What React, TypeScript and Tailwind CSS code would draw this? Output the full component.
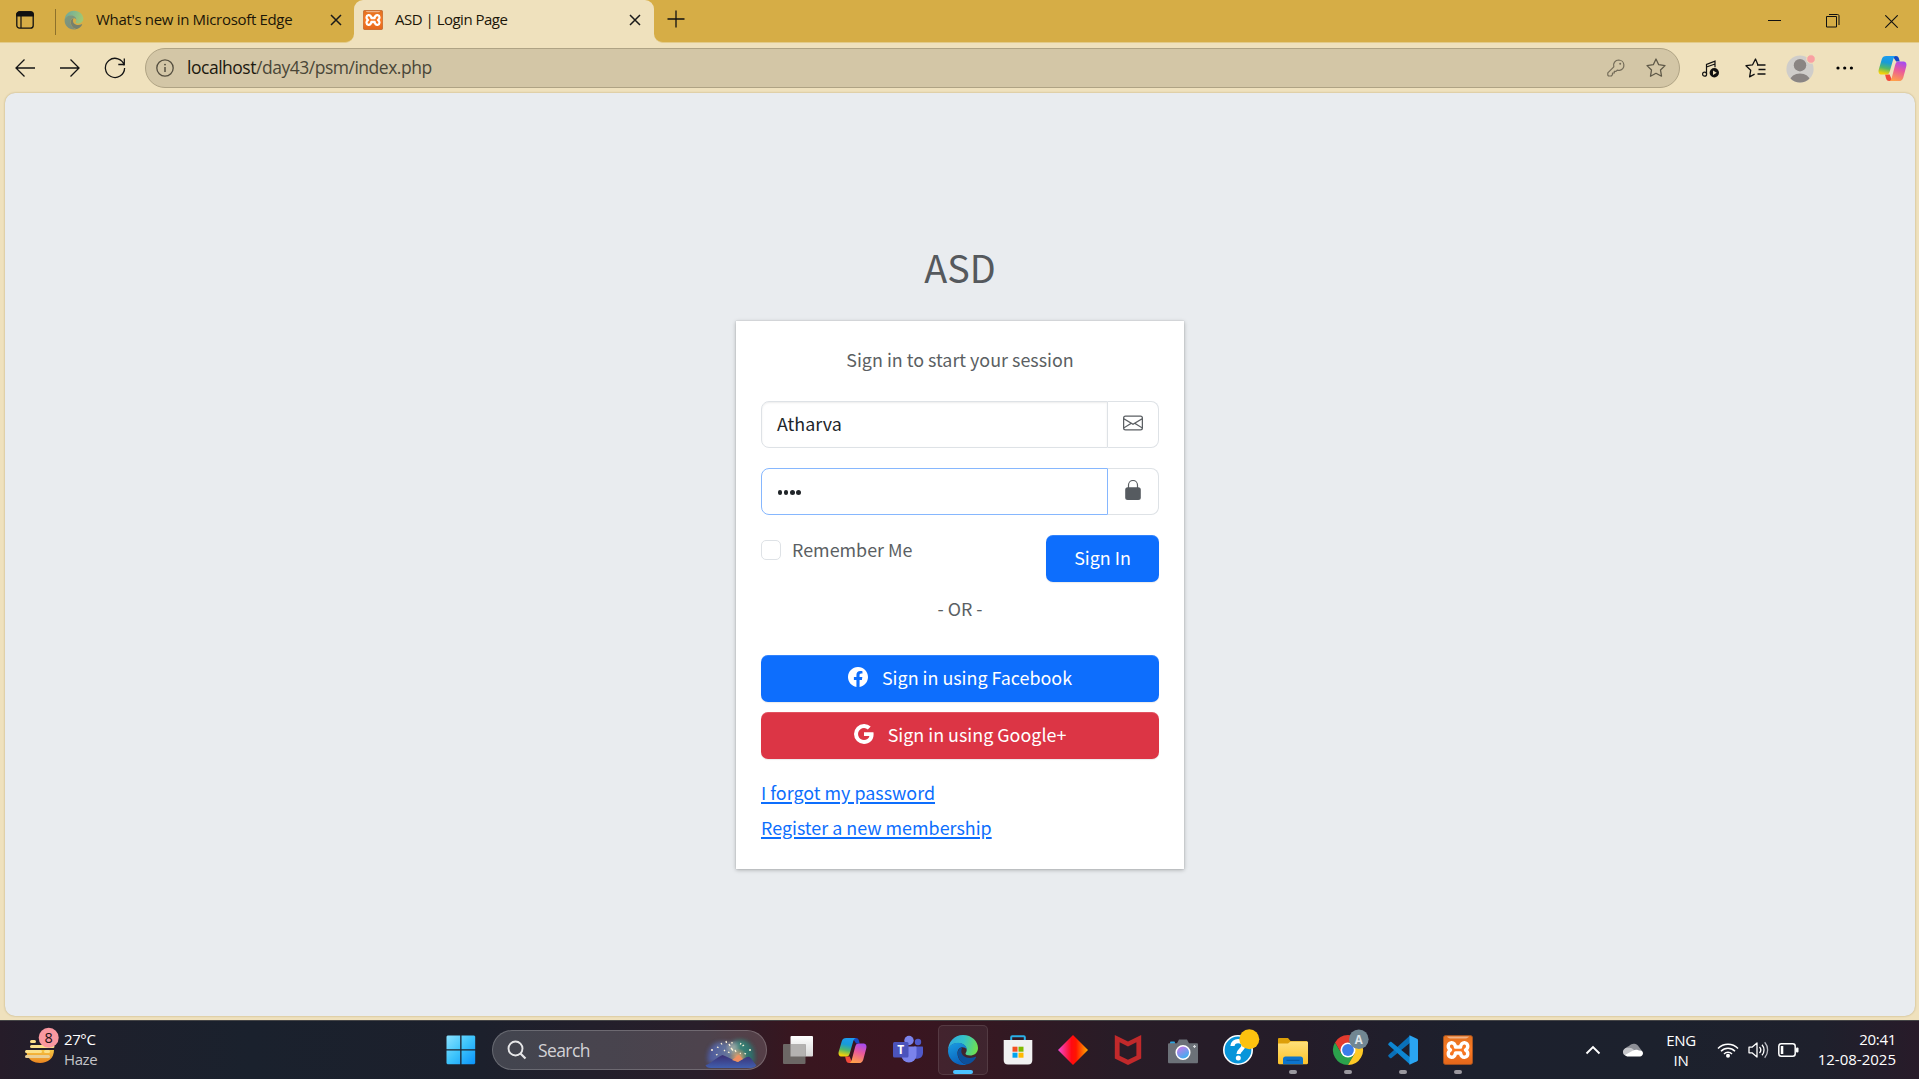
import type { ReactNode } from "react";
import { BsEnvelope, BsFacebook, BsGoogle } from "react-icons/bs";

const UI = "font-['Open_Sans','Noto_Sans',sans-serif]";
const PAGE = "font-['Noto_Sans_CJK_SC',sans-serif]";

/* ---------- shared logos ---------- */

function EdgeLogo({ size, faded = false }: { size: number; faded?: boolean }) {
  const id = faded ? "edge-f" : "edge";
  return (
    <svg width={size} height={size} viewBox="0 0 32 32">
      <defs>
        <linearGradient id={id + "a"} x1="0" y1="0.3" x2="1" y2="0.5">
          <stop offset="0" stopColor={faded ? "#6fa79a" : "#2fa9e0"} />
          <stop offset="0.5" stopColor={faded ? "#86b98b" : "#35c3c8"} />
          <stop offset="1" stopColor={faded ? "#a3c870" : "#6fe04f"} />
        </linearGradient>
        <linearGradient id={id + "b"} x1="0" y1="0" x2="0.4" y2="1">
          <stop offset="0" stopColor={faded ? "#7a9a80" : "#1b9de2"} />
          <stop offset="1" stopColor={faded ? "#7f8f7c" : "#0a63bd"} />
        </linearGradient>
      </defs>
      <path d="M1 17C1 8 7 1 16 1c9 0 15 6.500 15 13 0 5-4 7.500-8 7.500-3 0-4.500-1-4.500-2 0-.8 1.200-1.500 1.200-3.500C19.700 12 16 9 11 9 5 9 1.500 13 1 17z" fill={`url(#${id}a)`} />
      <path d="M1 17C1.300 12 6 8.800 11 8.800c5 0 8.700 3 8.700 6.700-1-1.500-2.500-2.200-4.200-2.200-3 0-5 2.500-5 6 0 6 5 11.200 9.500 11.300-1.200.4-2.500.5-4 .5C7 31 1 24 1 17z" fill={`url(#${id}b)`} />
      <path d="M15.500 13.300c-2.800.5-4.800 3-4.800 6 0 6 5.300 11.700 10 11 4-1 7-4 8.300-6.800.3-.7-.2-1-.8-.7-1.400.7-3.200 1.200-5.200 1.200-5 0-8.700-3.200-8.700-7 0-1.500.4-2.700 1.200-3.700z" fill={faded ? "#76806d" : "#0c509c"} />
    </svg>
  );
}

function CopilotLogo({ size, id }: { size: number; id: string }) {
  return (
    <svg width={size} height={size} viewBox="0 0 30 30">
      <defs>
        <linearGradient id={id + "l"} x1="0.5" y1="0" x2="0.3" y2="1">
          <stop offset="0" stopColor="#1d9bf0" />
          <stop offset="0.35" stopColor="#189bd8" />
          <stop offset="0.65" stopColor="#52b869" />
          <stop offset="0.95" stopColor="#f2d10a" />
        </linearGradient>
        <linearGradient id={id + "r"} x1="0.7" y1="0" x2="0.4" y2="1">
          <stop offset="0" stopColor="#a64bf0" />
          <stop offset="0.45" stopColor="#ea5a9b" />
          <stop offset="1" stopColor="#ffa04a" />
        </linearGradient>
      </defs>
      <path d="M15 2h3.500c2 0 2.700 1.300 3.300 3.200l.7 2.600h-3.700z" fill="#1648c5" />
      <path d="M15 28h-3.500c-2 0-2.700-1.300-3.300-3.200l-.9-3.600H12z" fill="#f2493b" />
      <path d="M8.500 2h10c-1.600.3-2.300 1.800-2.900 4l-3.300 11.500c-.7 2.600-1.600 3.700-3.800 3.700H4c-3 0-4-2.200-3.200-5.200L3.900 5.500C4.700 3 6 2 8.500 2z" fill={`url(#${id}l)`} />
      <path d="M21.500 28h-10c1.600-.3 2.300-1.800 2.900-4l3.300-12.500c.7-2.600 1.600-3.700 3.800-3.700H26c3 0 4 2.200 3.200 5.200L26.100 24.500C25.300 27 24 28 21.500 28z" fill={`url(#${id}r)`} />
    </svg>
  );
}

function XamppLogo({ size, id }: { size: number; id: string }) {
  return (
    <svg width={size} height={size} viewBox="0 0 30 30">
      <defs>
        <linearGradient id={id} x1="0" y1="0" x2="0" y2="1">
          <stop offset="0" stopColor="#e0701f" />
          <stop offset="0.5" stopColor="#fb7a24" />
          <stop offset="1" stopColor="#e2661a" />
        </linearGradient>
      </defs>
      <rect x="0.400" y="0.400" width="29.200" height="29.200" rx="2.500" fill={`url(#${id})`} stroke="#a85420" strokeWidth="0.800" />
      <path d="M4 1.500h22c-1 1.600-2.500 2-4 2H8c-1.500 0-3-.4-4-2z" fill="#fff" opacity="0.450" />
      <path d="M12.500 12h5c.2-2.500 2-4.600 4.400-4.200 3.600.7 3.800 5.200.6 7.200 3.200 2 3 6.500-.6 7.200-2.400.4-4.200-1.700-4.400-4.200h-5c-.2 2.500-2 4.600-4.400 4.200-3.600-.7-3.800-5.200-.6-7.200-3.200-2-3-6.500.6-7.200 2.400-.4 4.200 1.700 4.400 4.200z" fill="none" stroke="#fff" strokeWidth="3.400" strokeLinejoin="round" />
    </svg>
  );
}

/* ---------- browser chrome ---------- */

function CloseX() {
  return (
    <svg width="12" height="12" viewBox="0 0 12 12" className="shrink-0">
      <path d="M1 1l10 10M11 1L1 11" stroke="#1a1a1a" strokeWidth="1.500" />
    </svg>
  );
}

function TabStrip() {
  return (
    <div className={`flex h-[43px] shrink-0 bg-[#efe1bd] text-[15px] tracking-[-0.32px] text-[#1b1608] ${UI}`}>
      <div className="flex w-[354px] items-center rounded-br-[9px] border-b border-[#e3cb8a] bg-[#d6ad46] pb-[3px]">
        <svg width="18" height="18" viewBox="0 0 18 18" className="ml-4 shrink-0">
          <rect x="0.800" y="0.800" width="16.400" height="16.400" rx="2.800" fill="none" stroke="#111" strokeWidth="1.300" />
          <path d="M.8 5V3.500C.8 2 2 .8 3.500.8h11c1.500 0 2.700 1.200 2.700 2.700V5zM5 5v12" fill="#111" stroke="#111" strokeWidth="1.200" />
        </svg>
        <div className="ml-[21px] mt-1 h-[26px] w-px bg-[#8d712b]" />
        <div className="ml-2"><EdgeLogo size={20} faded /></div>
        <span className="ml-3 w-[234px] whitespace-nowrap">What's new in Microsoft Edge</span>
        <CloseX />
      </div>
      <div className="w-[300px] bg-[#d6ad46]">
        <div className="flex h-full items-center rounded-t-[9px] bg-[#efe1bd] pb-1 pl-[9px]">
          <XamppLogo size={20} id="xt" />
          <span className="ml-3 w-[234px] whitespace-nowrap tracking-[-0.5px]">ASD | Login Page</span>
          <CloseX />
        </div>
      </div>
      <div className="flex flex-1 items-center rounded-bl-[9px] border-b border-[#e3cb8a] bg-[#d6ad46]">
        <svg width="18" height="18" viewBox="0 0 18 18" className="mb-1 ml-[13px]">
          <path d="M9 .5v17M.5 9h17" stroke="#111" strokeWidth="1.300" />
        </svg>
        <div className="ml-auto flex items-center">
          <svg width="13" height="13" viewBox="0 0 13 13" className="mr-[45px]">
            <path d="M0 5.500h13" stroke="#111" />
          </svg>
          <svg width="14" height="14" viewBox="0 0 14 14" className="mr-[45px]">
            <path d="M.5 2.500h10v10.500H.5zM3 .5h8.500c1 0 1.500.5 1.500 1.500v9" fill="none" stroke="#111" />
          </svg>
          <svg width="13" height="13" viewBox="0 0 13 13" className="mr-[21px]">
            <path d="M.3.3l12.400 12.400M12.700.3L.3 12.700" stroke="#111" strokeWidth="1.100" />
          </svg>
        </div>
      </div>
    </div>
  );
}

function Toolbar() {
  return (
    <div className="flex h-[50px] shrink-0 items-center bg-[#efe1bd]">
      <svg width="20" height="18" viewBox="0 0 20 18" className="ml-[15px]">
        <path d="M20 9H1M9.500.5L1 9l8.500 8.500" fill="none" stroke="#141414" strokeWidth="1.300" />
      </svg>
      <svg width="20" height="18" viewBox="0 0 20 18" className="ml-[25px]">
        <path d="M0 9h19M10.500.5L19 9l-8.500 8.500" fill="none" stroke="#141414" strokeWidth="1.300" />
      </svg>
      <svg width="22" height="22" viewBox="0 0 22 22" className="ml-6">
        <path d="M20.300 8.500A9.600 9.600 0 1 0 20.600 11M20.300 1.500v6h-6" fill="none" stroke="#141414" strokeWidth="1.300" />
      </svg>
      <div className="ml-[19px] flex h-10 w-[1535px] items-center rounded-full border border-[#afa384] bg-[#d3c6a6]">
        <svg width="18" height="18" viewBox="0 0 18 18" className="ml-[10px]">
          <circle cx="9" cy="9" r="8.200" fill="none" stroke="#544e3f" strokeWidth="1.300" />
          <path d="M9 8v5" stroke="#544e3f" strokeWidth="1.500" />
          <circle cx="9" cy="5.600" r="0.950" fill="#544e3f" />
        </svg>
        <span className={`ml-[13px] whitespace-nowrap pb-px text-[17.5px] tracking-[-0.48px] text-[#4a4638] ${UI}`}>
          <span className="text-[#1c190f]">localhost</span>/day43/psm/index.php
        </span>
        <svg width="18" height="18" viewBox="0 0 18 18" className="ml-auto mr-[21px]">
          <path d="M11.700 1a5.200 5.200 0 0 1 1 10.300c-1 .2-1.900.1-2.500-.2L9 12.300H7.300V14H5.500v1.700L4.300 17H1.500l-.7-.8v-2.400l6-6A5.200 5.200 0 0 1 11.700 1z" fill="none" stroke="#746c59" strokeWidth="1.200" strokeLinejoin="round" />
          <circle cx="13.200" cy="4.800" r="1" fill="#746c59" />
        </svg>
        <svg width="20" height="20" viewBox="0 0 20 20" className="mr-[13px]">
          <path d="M10 1l2.700 5.700 6.300.9-4.500 4.400 1 6.200L10 15.300l-5.500 2.900 1-6.200L1 7.600l6.300-.9z" fill="none" stroke="#5f5948" strokeWidth="1.300" strokeLinejoin="round" />
        </svg>
      </div>
      <svg width="18" height="18" viewBox="0 0 18 18" className="ml-[22px] mt-[2px]">
        <path d="M4.500 14V4.500L13 1.200v6M4.500 7L13 4" fill="none" stroke="#111" strokeWidth="1.200" />
        <circle cx="2.600" cy="14.200" r="2" fill="none" stroke="#111" strokeWidth="1.200" />
        <circle cx="12.300" cy="12.800" r="4.700" fill="#111" />
        <path d="M11 10.500v4.600l3.700-2.300z" fill="#efe1bd" />
      </svg>
      <svg width="21" height="20" viewBox="0 0 21 20" className="ml-[25px]">
        <path d="M12.800 6.500L10.500 1 7.600 6.800 1 7.700l4.700 4.600-1.100 6.500 5-2.600M12 7h8.500M13.500 11.500h7M12.500 16h8" fill="none" stroke="#111" strokeWidth="1.300" strokeLinejoin="round" />
      </svg>
      <svg width="29" height="29" viewBox="0 0 29 29" className="ml-[20px]">
        <clipPath id="av"><circle cx="14" cy="15" r="13.600" /></clipPath>
        <circle cx="14" cy="15" r="13.600" fill="#cfcdca" />
        <g clipPath="url(#av)" fill="#8a8583">
          <circle cx="14" cy="11.200" r="6.200" />
          <ellipse cx="14" cy="26.500" rx="9.800" ry="7" />
        </g>
        <circle cx="25" cy="5" r="4.300" fill="#f9a0a2" stroke="#efe1bd" />
      </svg>
      <svg width="18" height="4" viewBox="0 0 18 4" className="ml-[21px]">
        <circle cx="2" cy="2" r="1.600" /><circle cx="8.700" cy="2" r="1.600" /><circle cx="15.400" cy="2" r="1.600" />
      </svg>
      <div className="ml-[24px]"><CopilotLogo size={29} id="ct" /></div>
    </div>
  );
}

/* ---------- login page ---------- */

function SocialButton({ color, icon, children }: { color: string; icon: ReactNode; children: ReactNode }) {
  return (
    <button className={`flex h-[47px] w-full items-center justify-center gap-[14px] rounded-[7px] pb-[3px] text-white shadow-[inset_0_1px_0_rgba(255,255,255,0.15),0_1px_1px_rgba(0,0,0,0.08)] ${color}`}>
      {icon}
      <span>{children}</span>
    </button>
  );
}

function LoginPage() {
  return (
    <main className={`mb-1 ml-[5px] mr-1 flex flex-1 flex-col items-center rounded-[10px] bg-[#e9ecef] text-[17.9px] text-[#5b5f63] shadow-[0_0_2px_rgba(120,90,20,0.45)] ${PAGE}`}>
      <h1 className="mt-[142px] flex h-[63px] items-center text-[37.8px] leading-[63px] text-[#55595d]">ASD</h1>
      <section className="mt-[23px] flex h-[548px] w-[448px] flex-col bg-white px-[25px] shadow-[0_0_1px_rgba(0,0,0,0.16),0_1px_4px_rgba(0,0,0,0.28)]">
        <p className="mt-[23px] text-center leading-[30px]">Sign in to start your session</p>
        <div className="mt-[27px] flex h-[47px]">
          <div className="flex w-[347px] items-center rounded-l-[8px] border border-[#dee2e6] pb-[3px] pl-[15px] text-[#212529] shadow-[inset_0_1px_2px_rgba(0,0,0,0.075)]">Atharva</div>
          <div className="flex flex-1 items-center justify-center rounded-r-[8px] border border-l-0 border-[#dee2e6] pb-1"><BsEnvelope size={20} /></div>
        </div>
        <div className="mt-5 flex h-[47px]">
          <div className="flex w-[347px] items-center gap-[1.5px] rounded-l-[8px] border border-[#86b7fe] pl-[15.5px] pt-[2px]">
            {[0, 1, 2, 3].map((i) => <i key={i} className="size-[4.7px] rounded-full bg-[#212529]" />)}
          </div>
          <div className="flex flex-1 items-center justify-center rounded-r-[8px] border border-l-0 border-[#dee2e6] pb-[3px]">
            <svg width="16" height="20" viewBox="0 0 16 20">
              <path d="M3.500 8V5a4.500 4.500 0 0 1 9 0v3" fill="none" stroke="#5b5f63" strokeWidth="1.200" />
              <rect x="0.200" y="7.300" width="15.600" height="12.700" rx="2.500" fill="#565b60" />
            </svg>
          </div>
        </div>
        <div className="mt-5 flex h-[47px] justify-between">
          <label className="flex h-[30px] items-center gap-[11px]">
            <span className="size-5 rounded-[5px] border border-[#dee2e6]" />
            <span className="pb-[3px] leading-[30px]">Remember Me</span>
          </label>
          <button className="h-[47px] w-[113px] rounded-[7px] bg-[#0d6efd] pb-[2px] text-white shadow-[inset_0_1px_0_rgba(255,255,255,0.15),0_1px_1px_rgba(0,0,0,0.08)]">Sign In</button>
        </div>
        <p className="mt-[11px] text-center leading-[30px]">- OR -</p>
        <div className="mt-[32px] flex flex-col gap-[10px]">
          <SocialButton color="bg-[#0d6efd]" icon={<BsFacebook size={20} />}>Sign in using Facebook</SocialButton>
          <SocialButton color="bg-[#dc3545]" icon={<BsGoogle size={20} />}>Sign in using Google+</SocialButton>
        </div>
        <div className="mt-[18px] flex flex-col items-start gap-[5px] leading-[30px] text-[#0d6efd]">
          <a className="underline decoration-[1.5px] underline-offset-[2px]">I forgot my password</a>
          <a className="underline decoration-[1.5px] underline-offset-[2px]">Register a new membership</a>
        </div>
      </section>
    </main>
  );
}

/* ---------- taskbar ---------- */

function Cell({ children, active, running }: { children: ReactNode; active?: boolean; running?: boolean }) {
  return (
    <div className="relative flex h-full w-[55px] shrink-0 items-center justify-center">
      {active && <div className="absolute inset-x-[2.5px] top-[4px] h-[50px] rounded-[5px] border border-white/10 bg-white/[0.06]" />}
      <div className="relative">{children}</div>
      {active && <div className="absolute bottom-[5px] h-1 w-5 rounded-full bg-[#4cc2ff]" />}
      {running && <div className="absolute bottom-[5px] h-1 w-2 rounded-full bg-[#9a989f]" />}
    </div>
  );
}

function TaskbarSearch() {
  return (
    <div className="ml-1 mr-[3px] flex h-10 w-[275px] shrink-0 items-center overflow-hidden rounded-full border border-white/20 bg-white/[0.17]">
      <svg width="20" height="20" viewBox="0 0 20 20" className="ml-[14px]">
        <circle cx="8.500" cy="8.500" r="7" fill="none" stroke="#e6e6e8" strokeWidth="1.900" />
        <path d="M13.500 13.500l5 5" stroke="#e6e6e8" strokeWidth="2.200" />
      </svg>
      <span className={`ml-[11px] text-[17.5px] tracking-[-0.6px] text-[#d3d2d6] ${UI}`}>Search</span>
      <svg width="54" height="32" viewBox="0 0 54 32" className="ml-auto mr-2 mt-1">
        <defs>
          <linearGradient id="sky" x1="0" y1="0" x2="1" y2="0">
            <stop offset="0" stopColor="#4b5cae" /><stop offset="0.450" stopColor="#6c80a8" /><stop offset="0.700" stopColor="#35907f" /><stop offset="1" stopColor="#266f6c" />
          </linearGradient>
          <linearGradient id="hill" x1="0" y1="0" x2="0" y2="1">
            <stop offset="0" stopColor="#3a2f73" /><stop offset="1" stopColor="#415fae" />
          </linearGradient>
          <radialGradient id="dusk"><stop offset="0" stopColor="#f2a06a" /><stop offset="1" stopColor="#f2a06a" stopOpacity="0" /></radialGradient>
          <filter id="soft" x="-20%" y="-20%" width="140%" height="140%"><feGaussianBlur stdDeviation="2" /></filter>
        </defs>
        <path d="M4 27C2 14 8 6 17 6c5 0 8 0 10 1 4-4 12-4 17-1 6 4 8 12 6 21z" fill="url(#sky)" filter="url(#soft)" opacity="0.850" />
        <circle cx="34" cy="21" r="9" fill="url(#dusk)" />
        <circle cx="29" cy="12" r="5" fill="#dcd3b8" opacity="0.500" filter="url(#soft)" />
        <path d="M1.500 29c5-1 10-7 17-10 6 2 10 5 15 7 5-2 9-6 12-5 3 2 5 7 7 8-1 2-3 3-6 3H7c-3 0-5-1-5.500-3z" fill="url(#hill)" />
        <path d="M28 24l6 2 5-3-4-4z" fill="#ee8f62" />
        <path d="M17 7l1 1.500M22 5l.5 2M7 14h2M12 19l1.500-.7M13 11l1.500.7M25 8l1 2M27 12l2 2.500M28 6v1.500M37 7l-.7 1.500M40 9l-1.500 1M47 14h-2M42 18l-1.500-.7M31 14l1 2M24 16l1.500.7M36 17l.7.7M20 14l1 1" stroke="#fff4d8" strokeWidth="1.300" />
      </svg>
    </div>
  );
}

function Weather() {
  return (
    <div className={`flex w-[433px] shrink-0 items-start self-stretch pl-6 pt-[3px] ${UI}`}>
      <svg width="36" height="42" viewBox="0 0 36 42" className="mt-[3px]">
        <defs>
          <linearGradient id="sun" x1="0" y1="0" x2="0" y2="1"><stop offset="0" stopColor="#f6c644" /><stop offset="1" stopColor="#ea8520" /></linearGradient>
        </defs>
        <path d="M2 23h28c0 8-6 13-14 13-6 0-11-3-13-8z" fill="url(#sun)" />
        <path d="M7.500 14.500h3M7.500 19.500H29M2.500 24.500h14M21.500 24.500h3" stroke="#fbe08a" strokeWidth="3" strokeLinecap="round" />
        <path d="M2.500 29.500h22" stroke="#eacf96" strokeWidth="3" strokeLinecap="round" />
        <circle cx="24.700" cy="10.800" r="10" fill="#f998a0" />
        <text x="24.700" y="16" textAnchor="middle" fontSize="14.500" fill="#1b1015">8</text>
      </svg>
      <div className="ml-1 text-[15px] leading-5 tracking-[-0.4px] text-white">
        <div className="mt-[5px]">27°C</div>
        <div className="text-[#c4c4c8]">Haze</div>
      </div>
    </div>
  );
}

function Tray() {
  return (
    <div className={`ml-auto flex shrink-0 items-center text-[15px] leading-5 tracking-[-0.3px] text-white ${UI}`}>
      <svg width="16" height="10" viewBox="0 0 16 10"><path d="M1.500 8.500L8 2l6.500 6.500" fill="none" stroke="#fff" strokeWidth="1.900" /></svg>
      <svg width="20" height="14" viewBox="0 0 20 14" className="ml-[22px]">
        <path d="M2 8a6 6 0 0 1 4-5 6 6 0 0 1 10 1l3 4-8 3z" fill="#8d8f96" />
        <path d="M0 9.500A4 4 0 0 1 5 5c2-.6 4 0 6 2l-6 6c-3 0-5-1.300-5-3.500z" fill="#c5c6ca" />
        <path d="M2 12l8-4.500c3-1.500 5-.5 6 0 3-.2 4 1 4 2.800 0 2-1.500 3.200-3 3.200H5c-1.300 0-2.300-.6-3-1.500z" fill="#fff" />
      </svg>
      <div className="ml-[20px] w-[36px] text-center">ENG<br />IN</div>
      <svg width="22" height="16" viewBox="0 0 22 16" className="ml-[18px]">
        <g fill="none" stroke="#fff" strokeWidth="1.500">
          <path d="M1 6.500a14 14 0 0 1 20 0" /><path d="M4 9.300a9.800 9.800 0 0 1 14 0" /><path d="M7 12a5.700 5.700 0 0 1 8 0" />
        </g>
        <circle cx="11" cy="13.700" r="2" fill="#fff" />
      </svg>
      <svg width="21" height="18" viewBox="0 0 21 18" className="ml-[9px]">
        <g fill="none" stroke="#fff" strokeWidth="1.300" strokeLinejoin="round">
          <path d="M1 6.200h3L9 2v14l-5-4.200H1z" />
          <path d="M11.500 6a4.500 4.500 0 0 1 0 6M14 3.700a8 8 0 0 1 0 10.600" />
          <path d="M16.700 1.300a11.600 11.600 0 0 1 0 15.400" stroke="#b9bac0" />
        </g>
      </svg>
      <svg width="21" height="14" viewBox="0 0 21 14" className="ml-[9px]">
        <rect x="0.800" y="0.800" width="16.400" height="12.400" rx="2.500" fill="none" stroke="#fff" strokeWidth="1.500" />
        <rect x="2.800" y="3" width="2.500" height="8" fill="#fff" /><rect x="18" y="4.500" width="2.500" height="5" rx="1" fill="#fff" />
      </svg>
      <div className="mb-[2px] ml-[17px] mr-[23px] w-[80px] whitespace-nowrap text-right"><span>20:41</span><br /><span className="tracking-[0px]">12-08-2025</span></div>
    </div>
  );
}

function Taskbar() {
  return (
    <footer className="flex h-[59px] shrink-0 items-center border-t border-[#454546] bg-[linear-gradient(90deg,#261c29_0px,#1e202c_90px,#1a212d_250px,#1c202c_480px,#291e2a_700px,#39161f_800px,#3a1520_900px,#331822_1000px,#281c27_1120px,#241c29_1300px,#1c202d_1470px,#1c212d_1650px,#1e202c_1820px,#281b29_1919px)]">
      <Weather />
      <Cell>
        <svg width="30" height="30" viewBox="0 0 30 30">
          <defs><linearGradient id="win" x1="0" y1="0" x2="1" y2="1"><stop offset="0" stopColor="#8be2ff" /><stop offset="0.500" stopColor="#3cc3fb" /><stop offset="1" stopColor="#0a93fb" /></linearGradient></defs>
          <path d="M1.500.5h12.700v13.700H.5V1.500zM15.500.5h12.700l1 1v12.700H15.500zM.5 15.500h13.700v13.700H1.500l-1-1zM15.500 15.500h13.700v12.700l-1 1H15.500z" fill="url(#win)" />
        </svg>
      </Cell>
      <TaskbarSearch />
      <Cell>
        <svg width="30" height="30" viewBox="0 0 30 30">
          <defs><linearGradient id="tv" x1="0" y1="0" x2="0" y2="1"><stop offset="0" stopColor="#fff" /><stop offset="1" stopColor="#d8d8d8" /></linearGradient></defs>
          <rect x="7.500" y="1" width="22.500" height="20.500" rx="1" fill="url(#tv)" />
          <rect x="0" y="9" width="22.500" height="20" rx="1" fill="#6c6765" />
          <rect x="7.500" y="9" width="15" height="12.500" fill="#b4b2b1" />
        </svg>
      </Cell>
      <Cell><CopilotLogo size={29} id="cb" /></Cell>
      <Cell>
        <svg width="30" height="30" viewBox="0 0 30 30">
          <circle cx="25" cy="7" r="3.200" fill="#5059c9" /><circle cx="16" cy="5.500" r="4.700" fill="#7b83eb" />
          <path d="M21 11.500h8c.6 0 1 .4 1 1V18a6 6 0 0 1-9 5z" fill="#5059c9" />
          <path d="M9 11.500h13.500c.6 0 1 .4 1 1V20a7.600 7.600 0 0 1-15.200 0z" fill="#7b83eb" />
          <rect x="0" y="7" width="15.500" height="15.500" rx="1.500" fill="#4b53bc" />
          <text x="7.800" y="19" textAnchor="middle" fontSize="12" fontWeight="700" fill="#fff" fontFamily="Open Sans">T</text>
        </svg>
      </Cell>
      <Cell active><EdgeLogo size={32} /></Cell>
      <Cell>
        <svg width="30" height="30" viewBox="0 0 30 30">
          <path d="M8.200 6V2.200c0-.7.300-1 1-1h11.600c.7 0 1 .3 1 1V6" fill="none" stroke="#2ab0e8" strokeWidth="2" />
          <path d="M.7 5h28.600v20c0 3-1.500 4.500-4.300 4.500H5C2.200 29.500.7 28 .7 25z" fill="#f1f1f1" />
          <path d="M9.500 11.700h5v5h-5z" fill="#f25022" /><path d="M15.500 11.700h5v5h-5z" fill="#7fba00" /><path d="M9.500 17.700h5v5h-5z" fill="#00a4ef" /><path d="M15.500 17.700h5v5h-5z" fill="#ffb900" />
        </svg>
      </Cell>
      <Cell>
        <svg width="30" height="30" viewBox="0 0 30 30">
          <defs><linearGradient id="dia"><stop offset="0" stopColor="#f04bd8" /><stop offset="0.450" stopColor="#ff0a12" /><stop offset="0.600" stopColor="#ff1400" /><stop offset="1" stopColor="#ffae00" /></linearGradient></defs>
          <path d="M15 0l15 15-15 15L0 15z" fill="url(#dia)" />
        </svg>
      </Cell>
      <Cell>
        <svg width="28" height="32" viewBox="0 0 28 32">
          <path d="M.8 1L14 7.500 27.200 1v23.500L14 31 .8 24.500z M5.600 8.300v13.500L14 25.800l8.400-4V8.300L14 12.500z" fill="#c1292b" fillRule="evenodd" />
        </svg>
      </Cell>
      <Cell>
        <svg width="30" height="26" viewBox="0 0 30 26" className="mt-px">
          <rect x="2" y="3.500" width="5" height="4" rx="1" fill="#2aa4e0" />
          <path d="M0 6.500c0-.8.500-1.300 1.300-1.300H9L11 1.500h8l2 3.700h7.700c.8 0 1.300.5 1.300 1.300V24c0 .8-.5 1.300-1.300 1.300H1.300C.5 25.300 0 24.800 0 24z" fill="#6c7178" />
          <defs><linearGradient id="lens" x1="0.200" y1="0" x2="0.800" y2="1"><stop offset="0.100" stopColor="#c07be8" /><stop offset="1" stopColor="#28b7f0" /></linearGradient></defs>
          <circle cx="15" cy="14.500" r="6.800" fill="url(#lens)" stroke="#fff" strokeWidth="1.500" />
          <path d="M26.500 7v3M25 8.500h3" stroke="#d5d8dc" strokeWidth="1.200" />
        </svg>
      </Cell>
      <Cell>
        <svg width="30" height="30" viewBox="0 0 30 30" className="overflow-visible">
          <circle cx="15" cy="15" r="14.200" fill="#0795da" stroke="#fff" strokeWidth="1.600" />
          <path d="M9.500 11c0-6.500 11-6.500 11-.5 0 4-5 4.500-5 8.500" fill="none" stroke="#fff" strokeWidth="4.200" />
          <circle cx="15.300" cy="23" r="2.500" fill="#fff" />
          <circle cx="26.300" cy="4.300" r="10" fill="#fdc20f" />
        </svg>
      </Cell>
      <Cell running>
        <svg width="30" height="28" viewBox="0 0 30 28" className="mt-px">
          <path d="M0 2.200C0 1.500.5 1 1.200 1H10l2.500 3H29v8H0z" fill="#dd9f08" />
          <defs><linearGradient id="fold" x1="0" y1="0" x2="0" y2="1"><stop offset="0" stopColor="#ffe07a" /><stop offset="1" stopColor="#fdc32a" /></linearGradient></defs>
          <path d="M0 6.500h10l2.500-2H29c.6 0 1 .4 1 1V26c0 .7-.5 1.200-1.200 1.200H1.200C.5 27.200 0 26.700 0 26z" fill="url(#fold)" />
          <path d="M5 27.200V22c0-1.500 1-2.500 2.500-2.500h15c1.500 0 2.500 1 2.500 2.500v5.200z" fill="#0d74cc" /><path d="M8.500 23.300h13" stroke="#07549c" />
        </svg>
      </Cell>
      <Cell running>
        <svg width="30" height="30" viewBox="0 0 30 30" className="overflow-visible">
          <path d="M2 7.500A15 15 0 0 1 28 7.500H15L8.500 18.700z" fill="#e33b2e" />
          <path d="M2 7.500A15 15 0 0 0 15 30l6.500-11.200-13 0z" fill="#2ba24c" />
          <path d="M28 7.500A15 15 0 0 1 15 30l6.500-11.200L20 7.500z" fill="#fdc926" />
          <circle cx="15" cy="15" r="7.500" fill="#fff" /><circle cx="15" cy="15" r="5.900" fill="#3b7de9" />
          <circle cx="25.800" cy="4.300" r="9.800" fill="#718792" />
          <text x="25.800" y="8.500" textAnchor="middle" fontSize="11.500" fontWeight="700" fill="#dfe6ea" fontFamily="Open Sans">A</text>
        </svg>
      </Cell>
      <Cell running>
        <svg width="30" height="30" viewBox="0 0 30 30">
          <path d="M21.500 8.300L3.500 23c-.5.400-1 .4-1.500 0l-1.500-1.400c-.5-.5-.5-1 0-1.500L22 .5v7.500z" fill="#0a70b8" />
          <path d="M21.500 21.700L3.500 7c-.5-.4-1-.4-1.500 0L.5 8.400c-.5.500-.5 1 0 1.500L22 29.500V22z" fill="#0d86d2" />
          <path d="M21.500.3L29 3.700c.6.300 1 .8 1 1.500v19.600c0 .7-.4 1.200-1 1.500l-7.500 3.500z" fill="#2aa5f2" />
        </svg>
      </Cell>
      <Cell running><XamppLogo size={30} id="xb" /></Cell>
      <Tray />
    </footer>
  );
}

export default function App() {
  return (
    <div className="flex h-screen w-full flex-col overflow-hidden bg-[#efe1bd]">
      <TabStrip />
      <Toolbar />
      <LoginPage />
      <Taskbar />
    </div>
  );
}
